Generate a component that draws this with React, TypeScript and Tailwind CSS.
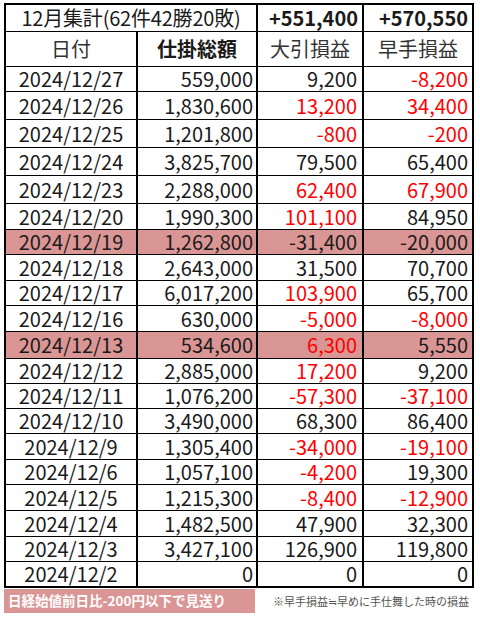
import React from "react";

type Row = {
  date: string;
  total: string;
  close: string;
  early: string;
  closeRed?: boolean;
  earlyRed?: boolean;
  mark?: boolean;
  h: string;
};

const rows: Row[] = [
  { date: "2024/12/27", total: "559,000", close: "9,200", early: "-8,200", earlyRed: true, h: "h-[25px]" },
  { date: "2024/12/26", total: "1,830,600", close: "13,200", early: "34,400", closeRed: true, earlyRed: true, h: "h-[28px]" },
  { date: "2024/12/25", total: "1,201,800", close: "-800", early: "-200", closeRed: true, earlyRed: true, h: "h-[28px]" },
  { date: "2024/12/24", total: "3,825,700", close: "79,500", early: "65,400", h: "h-[28px]" },
  { date: "2024/12/23", total: "2,288,000", close: "62,400", early: "67,900", closeRed: true, earlyRed: true, h: "h-[28px]" },
  { date: "2024/12/20", total: "1,990,300", close: "101,100", early: "84,950", closeRed: true, h: "h-[26px]" },
  { date: "2024/12/19", total: "1,262,800", close: "-31,400", early: "-20,000", mark: true, h: "h-[25px]" },
  { date: "2024/12/18", total: "2,643,000", close: "31,500", early: "70,700", h: "h-[26px]" },
  { date: "2024/12/17", total: "6,017,200", close: "103,900", early: "65,700", closeRed: true, h: "h-[25px]" },
  { date: "2024/12/16", total: "630,000", close: "-5,000", early: "-8,000", closeRed: true, earlyRed: true, h: "h-[26px]" },
  { date: "2024/12/13", total: "534,600", close: "6,300", early: "5,550", closeRed: true, mark: true, h: "h-[27px]" },
  { date: "2024/12/12", total: "2,885,000", close: "17,200", early: "9,200", closeRed: true, h: "h-[25px]" },
  { date: "2024/12/11", total: "1,076,200", close: "-57,300", early: "-37,100", closeRed: true, earlyRed: true, h: "h-[25px]" },
  { date: "2024/12/10", total: "3,490,000", close: "68,300", early: "86,400", h: "h-[25px]" },
  { date: "2024/12/9", total: "1,305,400", close: "-34,000", early: "-19,100", closeRed: true, earlyRed: true, h: "h-[26px]" },
  { date: "2024/12/6", total: "1,057,100", close: "-4,200", early: "19,300", closeRed: true, h: "h-[25px]" },
  { date: "2024/12/5", total: "1,215,300", close: "-8,400", early: "-12,900", closeRed: true, earlyRed: true, h: "h-[26px]" },
  { date: "2024/12/4", total: "1,482,500", close: "47,900", early: "32,300", h: "h-[26px]" },
  { date: "2024/12/3", total: "3,427,100", close: "126,900", early: "119,800", h: "h-[25px]" },
  { date: "2024/12/2", total: "0", close: "0", early: "0", h: "h-[26px]" },
];

const font = "font-['Noto_Sans_CJK_JP','Noto_Sans',sans-serif]";

export default function App() {
  return (
    <div className={`w-[480px] h-[617px] bg-white pl-[4px] pt-[3px] ${font} text-[20px] leading-none text-[#1a1a1a]`}>
      {/* ── Table ── */}
      <div className="w-[470px] border-l-2 border-t-2 border-black">
        {/* summary row */}
        <div className="grid grid-cols-[252px_106px_110px] h-[27px]">
          <div className="flex items-center justify-center tracking-[-0.2px] border-r-2 border-b border-black">
            12月集計(62件42勝20敗)
          </div>
          <div className="flex items-center justify-end pr-[4px] font-bold border-r-2 border-b border-black">
            +551,400
          </div>
          <div className="flex items-center justify-end pr-[4px] font-bold border-r-2 border-b border-black">
            +570,550
          </div>
        </div>

        {/* header row */}
        <div className="grid grid-cols-[132px_120px_106px_110px] h-[35px] text-[#333]">
          <div className="flex items-center justify-center border-r-2 border-b border-black">日付</div>
          <div className="flex items-center justify-center font-bold text-[#1a1a1a] border-r-2 border-b border-black">仕掛総額</div>
          <div className="flex items-center justify-center border-r-2 border-b border-black">大引損益</div>
          <div className="flex items-center justify-center border-r-2 border-b border-black">早手損益</div>
        </div>

        {/* data rows */}
        {rows.map((r, i) => (
          <div
            key={r.date}
            className={`grid grid-cols-[132px_120px_106px_110px] ${r.h} ${r.mark ? "bg-[#da9694]" : ""}`}
          >
            <div className={`flex items-center justify-center border-r-2 border-black ${i === rows.length - 1 ? "border-b-2" : "border-b"}`}>
              {r.date}
            </div>
            <div className={`flex items-center justify-end pr-[3px] border-r-2 border-black ${i === rows.length - 1 ? "border-b-2" : "border-b"}`}>
              {r.total}
            </div>
            <div className={`flex items-center justify-end pr-[5px] border-r-2 border-black ${r.closeRed ? "text-[#ff0000]" : ""} ${i === rows.length - 1 ? "border-b-2" : "border-b"}`}>
              {r.close}
            </div>
            <div className={`flex items-center justify-end pr-[4px] border-r-2 border-black ${r.earlyRed ? "text-[#ff0000]" : ""} ${i === rows.length - 1 ? "border-b-2" : "border-b"}`}>
              {r.early}
            </div>
          </div>
        ))}
      </div>

      {/* ── Footnotes ── */}
      <div className="flex items-center mt-[1px]">
        <div className="w-[251px] h-[24px] bg-[#da9694] flex items-center pl-[4px] text-[13.5px] font-bold text-white">
          日経始値前日比-200円以下で見送り
        </div>
        <div className="ml-[18px] text-[11px] text-[#555]">※早手損益≒早めに手仕舞した時の損益</div>
      </div>
    </div>
  );
}
